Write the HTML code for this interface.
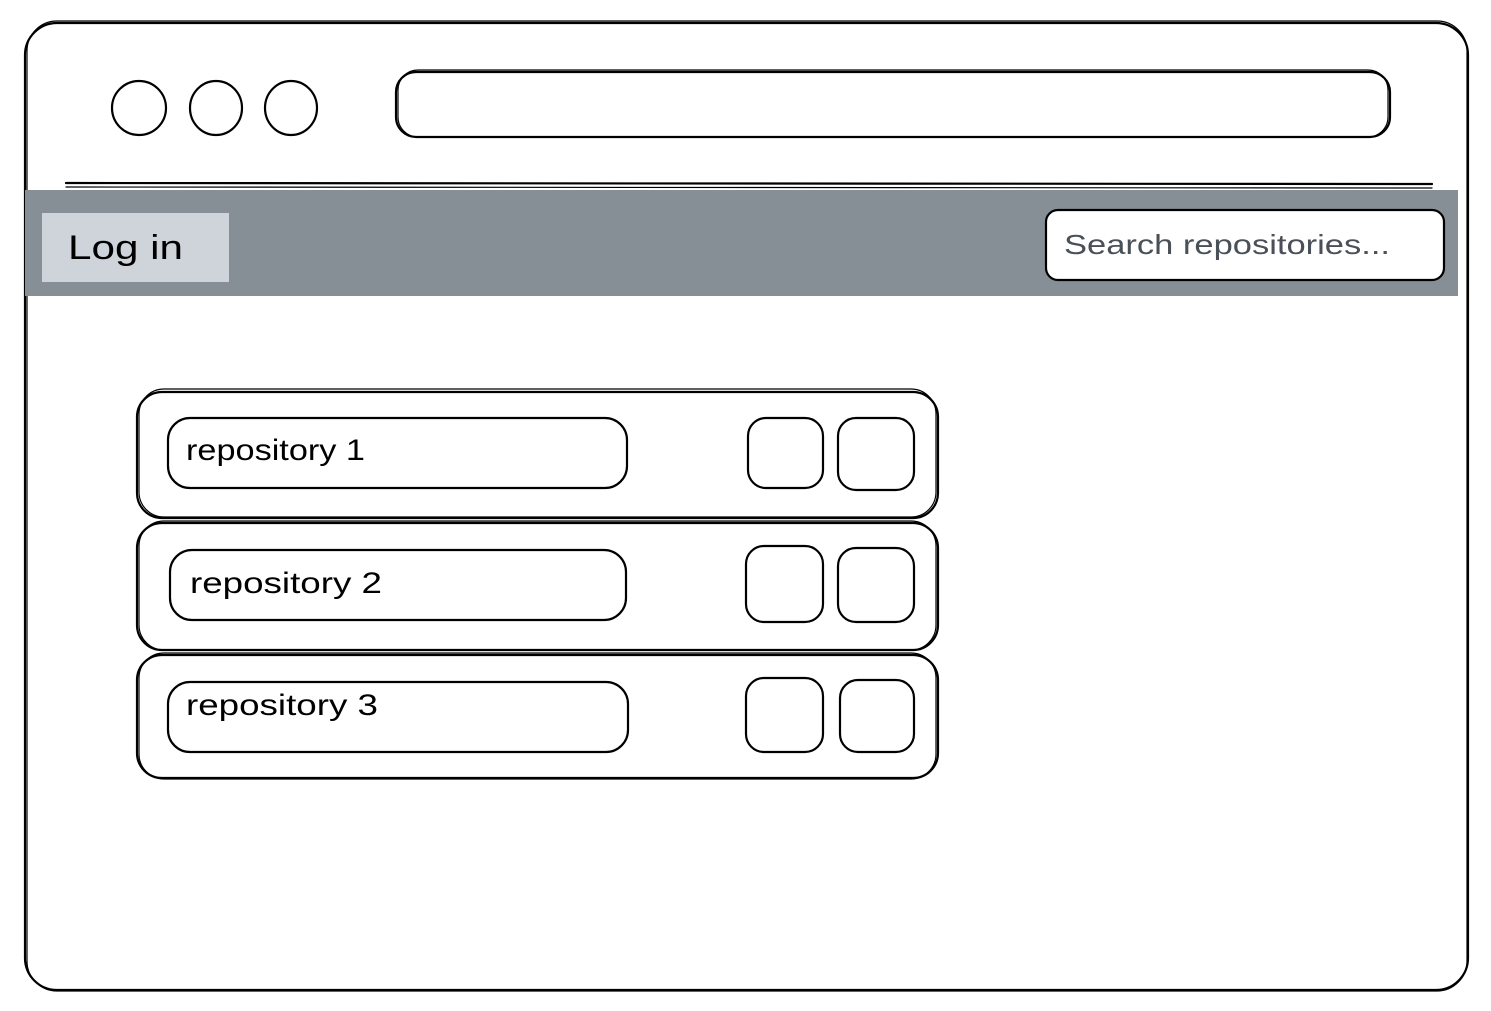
<!DOCTYPE html>
<html><head><meta charset="utf-8"><style>
html,body{margin:0;padding:0;background:#fff;width:1491px;height:1011px;overflow:hidden}
svg{display:block}
text{font-family:"Liberation Sans",sans-serif}
</style></head><body>
<svg width="1491" height="1011" viewBox="0 0 1491 1011" xmlns="http://www.w3.org/2000/svg">
<g fill="none" stroke="#000" stroke-width="2.2" stroke-linecap="round">
<rect x="25" y="23" width="1443" height="967" rx="32"/>
<rect x="27" y="21" width="1440" height="970" rx="30" stroke-width="1.2"/>
<ellipse cx="139" cy="108" rx="27" ry="27"/>
<ellipse cx="216" cy="108" rx="26" ry="27"/>
<ellipse cx="291" cy="108" rx="26" ry="27"/>
<rect x="396" y="72" width="994" height="65" rx="20"/>
<rect x="398" y="70" width="990" height="67" rx="20" stroke-width="1.2"/>
<line x1="66" y1="183" x2="1432" y2="184"/>
<line x1="66" y1="187" x2="1432" y2="188" stroke-width="1.2"/>
</g>
<rect x="25" y="190" width="1433" height="106" fill="#868e96"/>
<rect x="42" y="213" width="187" height="69" fill="#ced4da"/>
<text x="68" y="259" font-size="34" fill="#000" textLength="115" lengthAdjust="spacingAndGlyphs">Log in</text>
<rect x="1046" y="210" width="398" height="70" rx="12" fill="#fff" stroke="#000" stroke-width="2.2"/>
<text x="1064" y="254" font-size="28" fill="#495057" textLength="326" lengthAdjust="spacingAndGlyphs">Search repositories...</text>
<g fill="none" stroke="#000" stroke-width="2.2">
<rect x="137" y="392" width="801" height="126" rx="25"/>
<rect x="139" y="389" width="797" height="128" rx="25" stroke-width="1.2"/>
<rect x="168" y="418" width="459" height="70" rx="22"/>
<rect x="748" y="418" width="75" height="70" rx="18"/>
<rect x="838" y="418" width="76" height="72" rx="18"/>
<rect x="137" y="523" width="801" height="127" rx="25"/>
<rect x="139" y="521" width="797" height="129" rx="25" stroke-width="1.2"/>
<rect x="170" y="550" width="456" height="70" rx="22"/>
<rect x="746" y="546" width="77" height="76" rx="18"/>
<rect x="838" y="548" width="76" height="74" rx="18"/>
<rect x="137" y="655" width="801" height="123" rx="25"/>
<rect x="139" y="653" width="797" height="126" rx="25" stroke-width="1.2"/>
<rect x="168" y="682" width="460" height="70" rx="22"/>
<rect x="746" y="678" width="77" height="74" rx="18"/>
<rect x="840" y="680" width="74" height="72" rx="18"/>
</g>
<text x="186" y="460" font-size="30" fill="#000" textLength="179" lengthAdjust="spacingAndGlyphs">repository 1</text>
<text x="190" y="593" font-size="30" fill="#000" textLength="192" lengthAdjust="spacingAndGlyphs">repository 2</text>
<text x="186" y="715" font-size="30" fill="#000" textLength="192" lengthAdjust="spacingAndGlyphs">repository 3</text>
</svg>
</body></html>
